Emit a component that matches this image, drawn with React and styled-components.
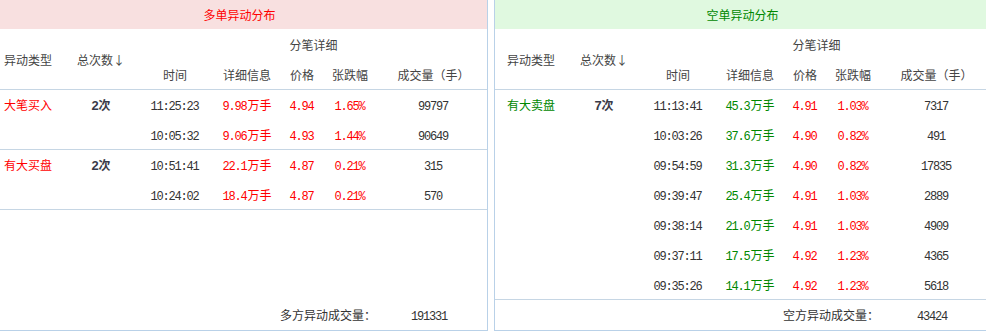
import styled, { createGlobalStyle } from "styled-components";

const GlobalStyle = createGlobalStyle`
  body {
    margin: 0;
    overflow: hidden;
    background: #fff;
    font-family: "Noto Sans CJK SC", "Liberation Sans", sans-serif;
    font-size: 12px;
    color: #333;
  }
`;

const COLS = "70px 78px 70px 74px 36px 60px 1fr";

const Page = styled.div`
  display: flex;
  align-items: stretch;
  gap: 6px;
  margin-left: -9px;
  width: 1000px;
`;

const Panel = styled.section`
  width: 497px;
  box-sizing: border-box;
  display: flex;
  flex-direction: column;
  border: 1px solid #b9d1e8;
  border-top: none;
`;

const Banner = styled.div`
  height: 29px;
  line-height: 29px;
  text-align: center;
  background: ${(p) => (p.$tone === "up" ? "#f8e0e0" : "#e0f9e0")};
  color: ${(p) => (p.$tone === "up" ? "#ff0000" : "#008800")};
`;

const Head = styled.div`
  display: grid;
  grid-template-columns: ${COLS};
  grid-template-rows: 30px 30px;
  border-bottom: 1px solid #c6d6e4;
  color: #444;
`;

const HeadCell = styled.div`
  display: flex;
  align-items: center;
  justify-content: ${(p) => (p.$left ? "flex-start" : "center")};
  padding-left: ${(p) => (p.$left ? "12px" : "0")};
  grid-row: ${(p) => p.$row || "auto"};
  grid-column: ${(p) => p.$col || "auto"};
`;

const Row = styled.div`
  display: grid;
  grid-template-columns: ${COLS};
  height: 30px;
  box-sizing: border-box;
  border-bottom: ${(p) => (p.$last ? "1px solid #c6d6e4" : "none")};
`;

const Cell = styled.div`
  line-height: 29px;
  white-space: nowrap;
  text-align: ${(p) => (p.$left ? "left" : "center")};
  padding-left: ${(p) => (p.$left ? "12px" : "0")};
  color: ${(p) => (p.$tone === "up" ? "#ff0000" : p.$tone === "down" ? "#008800" : "#333")};
`;

const Num = styled.span`
  font-family: "Liberation Mono", monospace;
  font-size: 12px;
  letter-spacing: -1.2px;
  margin-right: 1px;
`;

const Count = styled.span`
  font-family: "Liberation Sans", sans-serif;
  font-weight: bold;
  font-size: 13px;
  color: #3a3a48;
`;

const CountUnit = styled.span`
  font-family: "Noto Sans CJK SC", sans-serif;
  font-size: 12px;
`;

const Footer = styled.div`
  margin-top: auto;
  display: grid;
  grid-template-columns: 388px 1fr;
  height: 30px;
  line-height: 30px;
`;

const FootLabel = styled.div`
  text-align: right;
  padding-right: 4px;
`;

const FootValue = styled.div`
  text-align: center;
  padding-right: 8px;
`;

const panels = [
  {
    tone: "up",
    title: "多单异动分布",
    footLabel: "多方异动成交量：",
    total: "191331",
    groups: [
      {
        type: "大笔买入",
        count: "2",
        rows: [
          ["11:25:23", "9.98", "4.94", "1.65%", "99797"],
          ["10:05:32", "9.06", "4.93", "1.44%", "90649"],
        ],
      },
      {
        type: "有大买盘",
        count: "2",
        rows: [
          ["10:51:41", "22.1", "4.87", "0.21%", "315"],
          ["10:24:02", "18.4", "4.87", "0.21%", "570"],
        ],
      },
    ],
  },
  {
    tone: "down",
    title: "空单异动分布",
    footLabel: "空方异动成交量：",
    total: "43424",
    groups: [
      {
        type: "有大卖盘",
        count: "7",
        rows: [
          ["11:13:41", "45.3", "4.91", "1.03%", "7317"],
          ["10:03:26", "37.6", "4.90", "0.82%", "491"],
          ["09:54:59", "31.3", "4.90", "0.82%", "17835"],
          ["09:39:47", "25.4", "4.91", "1.03%", "2889"],
          ["09:38:14", "21.0", "4.91", "1.03%", "4909"],
          ["09:37:11", "17.5", "4.92", "1.23%", "4365"],
          ["09:35:26", "14.1", "4.92", "1.23%", "5618"],
        ],
      },
    ],
  },
];

function Board({ tone, title, footLabel, total, groups }) {
  return (
    <Panel>
      <Banner $tone={tone}>{title}</Banner>
      <Head>
        <HeadCell $left $row="1 / 3" $col="1">异动类型</HeadCell>
        <HeadCell $row="1 / 3" $col="2">总次数↓</HeadCell>
        <HeadCell $row="1" $col="3 / 8">分笔详细</HeadCell>
        <HeadCell $row="2" $col="3">时间</HeadCell>
        <HeadCell $row="2" $col="4">详细信息</HeadCell>
        <HeadCell $row="2" $col="5">价格</HeadCell>
        <HeadCell $row="2" $col="6">张跌幅</HeadCell>
        <HeadCell $row="2" $col="7">成交量（手）</HeadCell>
      </Head>
      {groups.map((g) =>
        g.rows.map((r, i) => (
          <Row key={g.type + i} $last={i === g.rows.length - 1}>
            <Cell $left $tone={i === 0 ? tone : undefined}>{i === 0 ? g.type : ""}</Cell>
            <Cell>
              {i === 0 && (
                <Count>
                  {g.count}
                  <CountUnit>次</CountUnit>
                </Count>
              )}
            </Cell>
            <Cell><Num>{r[0]}</Num></Cell>
            <Cell $tone={tone}><Num>{r[1]}</Num>万手</Cell>
            <Cell $tone="up"><Num>{r[2]}</Num></Cell>
            <Cell $tone="up"><Num>{r[3]}</Num></Cell>
            <Cell><Num>{r[4]}</Num></Cell>
          </Row>
        ))
      )}
      <Footer>
        <FootLabel>{footLabel}</FootLabel>
        <FootValue><Num>{total}</Num></FootValue>
      </Footer>
    </Panel>
  );
}

export default function App() {
  return (
    <>
      <GlobalStyle />
      <Page>
        {panels.map((p) => (
          <Board key={p.title} {...p} />
        ))}
      </Page>
    </>
  );
}
